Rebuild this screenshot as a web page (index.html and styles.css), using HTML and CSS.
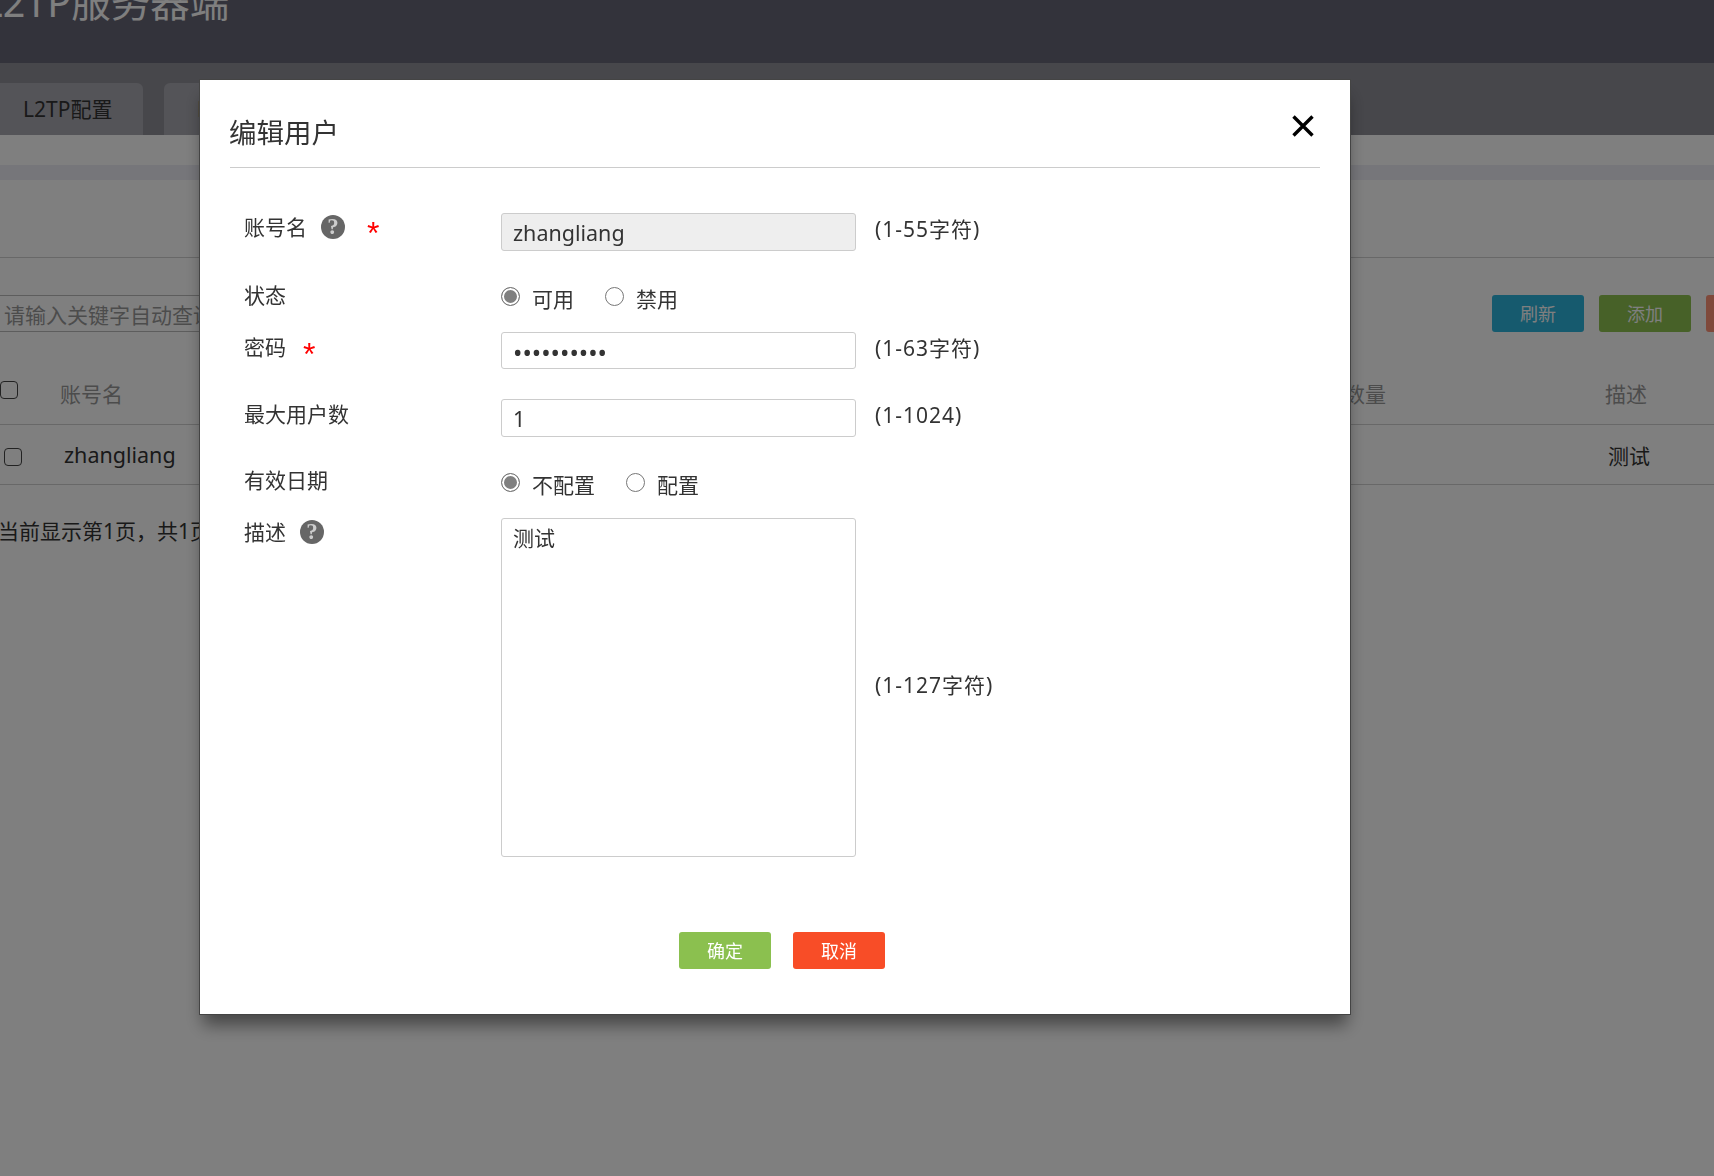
FILE: index.html
```html
<!DOCTYPE html>
<html lang="zh-CN">
<head>
<meta charset="utf-8">
<title>L2TP服务器端</title>
<link rel="stylesheet" href="styles.css">
</head>
<body>
<div class="page">
  <header class="top"><h1 class="top-title">L2TP服务器端</h1></header>
  <nav class="tabs">
    <div class="tab">L2TP配置</div>
    <div class="tab tab-second">L</div>
  </nav>
  <div class="stripe"></div>
  <div class="intro"></div>
  <div class="toolbar">
    <input class="search" placeholder="请输入关键字自动查询">
    <div class="actions">
      <button class="act act-blue">刷新</button>
      <button class="act act-green">添加</button>
      <button class="act act-red" aria-label="删除"></button>
    </div>
  </div>
  <div class="row row-head">
    <input type="checkbox" class="check check-head">
    <span class="cell-name cell-name-head">账号名</span>
    <span class="cell-count">数量</span>
    <span class="cell-desc">描述</span>
  </div>
  <div class="row row-body">
    <input type="checkbox" class="check check-body">
    <span class="cell-name">zhangliang</span>
    <span class="cell-count"></span>
    <span class="cell-desc cell-desc-body">测试</span>
  </div>
  <p class="pager">当前显示第1页，共1页</p>
</div>

<div class="overlay"></div>

<section class="modal">
  <div class="modal-head">
    <h2 class="modal-title">编辑用户</h2>
    <svg class="close" viewBox="0 0 22 22" width="22" height="22"><path d="M1.5 1.5 20.5 20.5M20.5 1.5 1.5 20.5" stroke="#000" stroke-width="3.4" fill="none"/></svg>
  </div>
  <form class="form">
    <div class="f-row f-user">
      <div class="f-label f-label-user">账号名<span class="help help-a">?</span><span class="req req-a">*</span></div>
      <input class="field field-off" value="zhangliang" readonly>
      <span class="hint">(1-55字符)</span>
    </div>
    <div class="f-row f-state">
      <div class="f-label f-label-state">状态</div>
      <div class="radios">
        <label class="radio"><input type="radio" name="s" checked>可用</label>
        <label class="radio"><input type="radio" name="s">禁用</label>
      </div>
    </div>
    <div class="f-row f-pass">
      <div class="f-label f-label-raised">密码<span class="req req-b">*</span></div>
      <input class="field field-pass" type="password" value="1234567890">
      <span class="hint">(1-63字符)</span>
    </div>
    <div class="f-row f-max">
      <div class="f-label f-label-raised">最大用户数</div>
      <input class="field" value="1">
      <span class="hint">(1-1024)</span>
    </div>
    <div class="f-row f-date">
      <div class="f-label">有效日期</div>
      <div class="radios">
        <label class="radio"><input type="radio" name="d" checked>不配置</label>
        <label class="radio"><input type="radio" name="d">配置</label>
      </div>
    </div>
    <div class="f-row f-desc">
      <div class="f-label f-label-top">描述<span class="help help-b">?</span></div>
      <textarea class="area">测试</textarea>
      <span class="hint hint-area">(1-127字符)</span>
    </div>
    <div class="buttons">
      <button type="button" class="btn btn-ok">确定</button>
      <button type="button" class="btn btn-cancel">取消</button>
    </div>
  </form>
</section>
</body>
</html>
```
FILE: styles.css
```css
* { box-sizing: border-box; }
html, body { margin: 0; height: 100%; overflow: hidden; }
body {
  font-family: "Noto Sans", "Noto Sans CJK SC", sans-serif;
  font-size: 21px;
  color: #333;
  background: #fff;
}
.page { width: 1714px; height: 1176px; overflow: hidden; }

.top { height: 63px; background: #666676; overflow: hidden; }
.top-title {
  margin: 0 0 0 -18px;
  font-size: 39.5px;
  font-weight: 400;
  line-height: 4px;
  color: #fff;
}
.tabs { height: 72px; padding-top: 20px; background: #8e8e96; display: flex; gap: 21px; }
.tab {
  width: 164px;
  margin-left: -21px;
  height: 52px;
  background: #a8a8b0;
  border-radius: 6px 6px 0 0;
  padding-left: 44px;
  line-height: 52px;
  color: #333;
}
.tab-second { margin-left: 0; width: 164px; padding-left: 33px; }
.stripe { height: 15px; margin-top: 30px; background: #ececf4; }
.intro { height: 78px; border-bottom: 1px solid #d0d0d0; }
.toolbar { height: 90px; display: flex; align-items: flex-start; justify-content: space-between; padding-top: 37px; }
.search {
  width: 300px;
  height: 37px;
  margin-left: -2px;
  padding: 3px 0 0 5px;
  border: 1px solid #bbb;
  font: inherit;
  background: #fff;
}
.search::placeholder { color: #999; opacity: 1; }
.actions { display: flex; gap: 15px; margin-right: -84px; }
.act {
  width: 92px;
  height: 37px;
  padding: 0 0 2px;
  border: 0;
  border-radius: 3px;
  color: #fff;
  font: inherit;
  font-size: 18px;
}
.act-blue { background: #2cb4dc; }
.act-green { background: #8ec250; }
.act-red { background: #ff9276; }

.row { position: relative; display: flex; align-items: center; border-bottom: 1px solid #d0d0d0; }
.row-head { height: 77px; color: #999; padding-top: 14px; }
.row-body { height: 60px; }
.check {
  appearance: none;
  margin: 0;
  width: 18px;
  height: 18px;
  border: 1px solid #444;
  border-radius: 4px;
  background: #fff;
}
.check-head { margin-left: 0; align-self: flex-start; margin-top: 19px; }
.check-body { margin-left: 4px; margin-top: 4px; }
.cell-name { width: 1284px; margin-left: 42px; font-size: 21.5px; }
.cell-name-head { font-size: 21px; }
.cell-count { width: 261px; }
.cell-desc { font-size: 21px; }
.cell-desc-body { margin-left: -1px; color: #333; }
.pager { margin: 32px 0 0 -2px; line-height: 28px; }

.overlay { position: fixed; inset: 0; background: rgba(0, 0, 0, .5); }

.modal {
  position: fixed;
  left: 199px;
  top: 79px;
  width: 1152px;
  height: 936px;
  border: 1px solid #444;
  background: #fff;
  padding: 0 30px;
  box-shadow: 0 14px 16px -4px rgba(0, 0, 0, .45);
}
.modal-head {
  position: relative;
  height: 88px;
  border-bottom: 1px solid #ccc;
  padding-top: 33px;
}
.modal-title { margin: 0 0 0 -1px; font-size: 27.5px; font-weight: 400; line-height: 40px; color: #333; }
.close { position: absolute; right: 6px; top: 35px; }

.form { padding: 0 0 0 14px; }
.f-row { display: flex; align-items: center; }
.f-label { width: 257px; flex: none; display: flex; align-items: center; line-height: 28px; }
.f-label-user { margin-bottom: 10px; }
.f-label-state { margin-top: 2px; }
.f-label-raised { margin-bottom: 8px; }
.f-user { margin-top: 45px; height: 38px; }
.f-state { margin-top: 28px; height: 30px; }
.f-pass { margin-top: 23px; height: 37px; }
.f-max { margin-top: 30px; height: 38px; }
.f-date { margin-top: 28px; height: 30px; }
.f-desc { margin-top: 23px; height: 339px; position: relative; }
.f-label-top { align-self: flex-start; }

.field, .area {
  width: 355px;
  border: 1px solid #ccc;
  border-radius: 3px;
  font: inherit;
  font-size: 21.5px;
  color: #333;
  background: #fff;
  outline: 0;
}
.field { height: 100%; padding: 0 11px; }
.field-off { background: #eee; }
.field-pass { font-size: 25px; padding-top: 2px; }
.area { height: 339px; padding: 5px 11px; font-size: 21px; resize: none; line-height: 28px; display: block; }
.hint { margin-left: 19px; line-height: 28px; margin-top: -6px; letter-spacing: 1px; }
.hint-area { margin-top: -5px; }

.help {
  width: 24px;
  height: 24px;
  border-radius: 50%;
  background: #666;
  color: #ccc;
  font-family: "Liberation Serif", serif;
  font-weight: 700;
  font-size: 23px;
  line-height: 24px;
  text-align: center;
  flex: none;
}
.help-a { margin-left: 14px; }
.help-b { margin-left: 14px; }
.req {
  color: #f00;
  font-family: "Liberation Sans", sans-serif;
  font-size: 32px;
  line-height: 28px;
  height: 20px;
  flex: none;
}
.req-a { margin-left: 22px; margin-top: 4px; }
.req-b { margin-left: 17px; margin-top: 6px; }

.radios { display: flex; gap: 31px; padding-top: 9px; }
.radio { display: flex; align-items: center; gap: 12px; line-height: 28px; }
.radio input {
  appearance: none;
  margin: -4px 0 0;
  width: 19px;
  height: 19px;
  border: 1px solid #777;
  border-radius: 50%;
  background: #fff;
}
.radio input:checked { background: #808080; box-shadow: inset 0 0 0 2px #fff; }

.buttons { display: flex; gap: 22px; margin-top: 75px; padding-left: 435px; }
.btn {
  width: 92px;
  height: 37px;
  padding: 0 0 2px;
  border: 0;
  border-radius: 3px;
  color: #fff;
  font: inherit;
  font-size: 18px;
}
.btn-ok { background: #8bc04f; }
.btn-cancel { background: #f84d27; }
```
